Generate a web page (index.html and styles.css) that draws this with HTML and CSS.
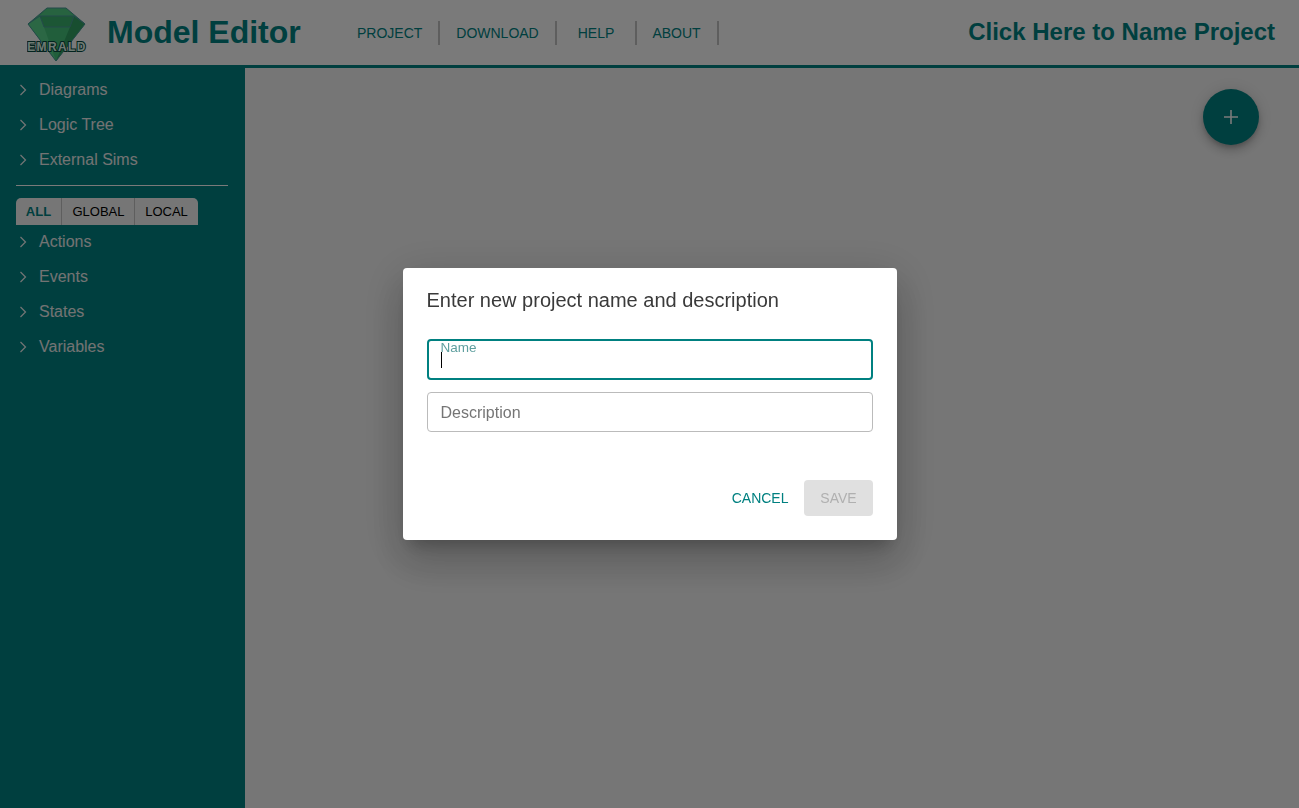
FILE: index.html
```html
<!DOCTYPE html>
<html lang="en">
<head>
    <meta charset="UTF-8">
    <title>EMRALD Model Editor</title>
    <link rel="stylesheet" href="styles.css">
</head>
<body>
    <header class="topbar">
        <svg class="logo" viewBox="0 0 60 56" width="60" height="56">
            <polygon points="20,1 39,1 58,17 29,54 1,17" fill="#46c47c"/>
            <polygon points="20,1 39,1 47,9 13,9" fill="#52d086"/>
            <polygon points="13,9 47,9 43,20 17,20" fill="#3cb470"/>
            <polygon points="1,17 13,9 17,20 29,54" fill="#5ad88e"/>
            <polygon points="58,17 47,9 43,20 29,54" fill="#32a464"/>
            <polyline points="20,1 39,1 58,17 29,54 1,17 20,1" fill="none" stroke="#4a9a9a" stroke-width="1"/>
            <polyline points="1,17 13,9 47,9 58,17" fill="none" stroke="#4a9a9a" stroke-width="1"/>
            <polyline points="13,9 17,20 43,20 47,9" fill="none" stroke="#4a9a9a" stroke-width="1"/>
            <text class="logo-text" x="30" y="44" text-anchor="middle">EMRALD</text>
        </svg>
        <h1 class="app-title">Model Editor</h1>
        <nav class="main-nav">
            <a class="nav-project">PROJECT</a>
            <a class="nav-download">DOWNLOAD</a>
            <a class="nav-help">HELP</a>
            <a class="nav-about">ABOUT</a>
        </nav>
        <div class="project-name">Click Here to Name Project</div>
    </header>

    <div class="content">
        <aside class="sidebar">
            <ul class="side-list">
                <li><svg class="chevron" viewBox="0 0 8 12" width="8" height="12"><path d="M1.5 1L6.5 6L1.5 11" fill="none" stroke="#f4f4f4" stroke-width="1.2"/></svg>Diagrams</li>
                <li><svg class="chevron" viewBox="0 0 8 12" width="8" height="12"><path d="M1.5 1L6.5 6L1.5 11" fill="none" stroke="#f4f4f4" stroke-width="1.2"/></svg>Logic Tree</li>
                <li><svg class="chevron" viewBox="0 0 8 12" width="8" height="12"><path d="M1.5 1L6.5 6L1.5 11" fill="none" stroke="#f4f4f4" stroke-width="1.2"/></svg>External Sims</li>
            </ul>
            <hr class="side-rule">
            <div class="scope-tabs">
                <button class="scope-tab active tab-all">ALL</button>
                <button class="scope-tab tab-global">GLOBAL</button>
                <button class="scope-tab tab-local">LOCAL</button>
            </div>
            <ul class="side-list side-list-lower">
                <li><svg class="chevron" viewBox="0 0 8 12" width="8" height="12"><path d="M1.5 1L6.5 6L1.5 11" fill="none" stroke="#f4f4f4" stroke-width="1.2"/></svg>Actions</li>
                <li><svg class="chevron" viewBox="0 0 8 12" width="8" height="12"><path d="M1.5 1L6.5 6L1.5 11" fill="none" stroke="#f4f4f4" stroke-width="1.2"/></svg>Events</li>
                <li><svg class="chevron" viewBox="0 0 8 12" width="8" height="12"><path d="M1.5 1L6.5 6L1.5 11" fill="none" stroke="#f4f4f4" stroke-width="1.2"/></svg>States</li>
                <li><svg class="chevron" viewBox="0 0 8 12" width="8" height="12"><path d="M1.5 1L6.5 6L1.5 11" fill="none" stroke="#f4f4f4" stroke-width="1.2"/></svg>Variables</li>
            </ul>
        </aside>
        <main class="canvas">
            <button class="fab" aria-label="Add">
                <svg viewBox="0 0 14 14" width="14" height="14">
                    <path d="M7 0V14M0 7H14" stroke="#fff" stroke-width="1.6" fill="none"/>
                </svg>
            </button>
        </main>
    </div>

    <div class="backdrop">
        <div class="dialog">
            <h2 class="dialog-title">Enter new project name and description</h2>
            <div class="field field-focused">
                <label class="field-label" for="name">Name</label>
                <input type="text" id="name" class="field-input">
                <span class="caret"></span>
            </div>
            <div class="field">
                <input type="text" id="description" class="field-input" placeholder="Description">
            </div>
            <div class="dialog-actions">
                <button class="btn-cancel">CANCEL</button>
                <button class="btn-save" disabled>SAVE</button>
            </div>
        </div>
    </div>
</body>
</html>
```

FILE: styles.css
```css
* {
    box-sizing: border-box;
}
body {
    font-family: 'Liberation Sans', Arial, sans-serif;
    margin: 0;
    height: 808px;
    overflow: hidden;
    background-color: #fff;
}
.topbar {
    height: 68px;
    display: flex;
    align-items: center;
    background-color: #fff;
    border-bottom: 3px solid #008585;
    padding: 0 24px 0 27px;
}
.logo {
    flex: none;
    margin-top: 4px;
}
.logo-text {
    font-family: 'Liberation Sans', Arial, sans-serif;
    font-size: 12px;
    font-weight: bold;
    letter-spacing: 1.4px;
    fill: #e6fff2;
    stroke: #064a40;
    stroke-width: 2px;
    paint-order: stroke;
}
.app-title {
    margin: 0 0 0 20px;
    font-size: 32px;
    font-weight: bold;
    color: #008484;
    width: 250px;
}
.main-nav {
    display: flex;
    align-items: center;
}
.main-nav a {
    font-size: 14px;
    line-height: 24px;
    color: #008484;
    border-right: 2px solid #c4c4c4;
    text-align: center;
}
.nav-project {
    width: 83px;
    padding-right: 17px;
}
.nav-download {
    width: 117px;
}
.nav-help {
    width: 80px;
}
.nav-about {
    width: 82px;
    padding-right: 1px;
}
.project-name {
    margin-left: auto;
    font-size: 24px;
    font-weight: bold;
    color: #008484;
    margin-bottom: 2px;
}
.content {
    display: flex;
    height: 740px;
}
.sidebar {
    width: 245px;
    flex: none;
    background-color: #008585;
    padding-top: 7px;
    margin-top: -3px;
    height: 743px;
}
.side-list {
    list-style: none;
    margin: 0;
    padding: 0;
}
.side-list-lower {
    margin-top: -1px;
}
.side-list li {
    height: 35px;
    display: flex;
    align-items: center;
    padding-left: 19px;
    font-size: 16px;
    color: #f0f0f0;
}
.chevron {
    flex: none;
    margin-right: 12px;
}
.side-rule {
    margin: 8px 17px 12px 16px;
    border: 0;
    border-top: 1px solid #fff;
}
.scope-tabs {
    display: flex;
    margin-left: 16px;
    width: 182px;
    height: 27px;
}
.scope-tab {
    height: 27px;
    border: 0;
    border-right: 1px solid #c4c4c4;
    background-color: #f7f7f7;
    font-family: inherit;
    font-size: 13px;
    color: #000;
    padding: 0;
}
.tab-all {
    width: 46px;
    border-top-left-radius: 5px;
}
.tab-global {
    width: 73px;
    padding-left: 1px;
}
.tab-local {
    width: 63px;
    border-right: 0;
    border-top-right-radius: 5px;
}
.scope-tab.active {
    font-weight: bold;
    color: #008484;
}
.canvas {
    flex: 1;
    background-color: #f7f7f7;
    display: flex;
    justify-content: flex-end;
    align-items: flex-start;
    padding: 21px 40px 0 0;
}
.fab {
    width: 56px;
    height: 56px;
    border-radius: 50%;
    border: 0;
    background-color: #008484;
    display: flex;
    align-items: center;
    justify-content: center;
    box-shadow: 0 3px 5px -1px rgba(0, 0, 0, 0.2), 0 6px 10px 0 rgba(0, 0, 0, 0.14), 0 1px 18px 0 rgba(0, 0, 0, 0.12);
}
.backdrop {
    position: fixed;
    inset: 0;
    background-color: rgba(0, 0, 0, 0.52);
    display: flex;
    align-items: center;
    justify-content: center;
}
.dialog {
    width: 494px;
    height: 272px;
    background-color: #fff;
    border-radius: 4px;
    padding: 20px 24px 24px;
    display: flex;
    flex-direction: column;
    box-shadow: 0 11px 15px -7px rgba(0, 0, 0, 0.2), 0 24px 38px 3px rgba(0, 0, 0, 0.14), 0 9px 46px 8px rgba(0, 0, 0, 0.12);
}
.dialog-title {
    margin: 0 0 27px;
    font-size: 20px;
    line-height: 24px;
    font-weight: normal;
    color: #3a3a3a;
}
.field {
    position: relative;
    height: 40px;
    margin-bottom: 12px;
}
.field-focused {
    height: 41px;
}
.field-input {
    width: 100%;
    height: 100%;
    border: 1px solid #bbb;
    border-radius: 4px;
    padding: 2px 13px 0;
    font-family: inherit;
    font-size: 16px;
    background-color: #fff;
    outline: none;
}
.field-input::placeholder {
    color: #757575;
    opacity: 1;
}
.field-focused .field-input {
    border: 2px solid #008080;
}
.field-label {
    position: absolute;
    left: 14px;
    top: 1px;
    font-size: 13.5px;
    line-height: 15px;
    color: #5f9f9f;
}
.caret {
    position: absolute;
    left: 14px;
    top: 13px;
    width: 1px;
    height: 16px;
    background-color: #000;
}
.dialog-actions {
    margin-top: auto;
    display: flex;
    justify-content: flex-end;
    align-items: center;
}
.btn-cancel {
    border: 0;
    background: none;
    padding: 0;
    margin-right: 15px;
    font-family: inherit;
    font-size: 14px;
    color: #008080;
}
.btn-save {
    width: 69px;
    height: 36px;
    border: 0;
    border-radius: 4px;
    background-color: #e0e0e0;
    font-family: inherit;
    font-size: 14px;
    color: #b0b0b0;
    padding: 0 0 0 1px;
}
```
